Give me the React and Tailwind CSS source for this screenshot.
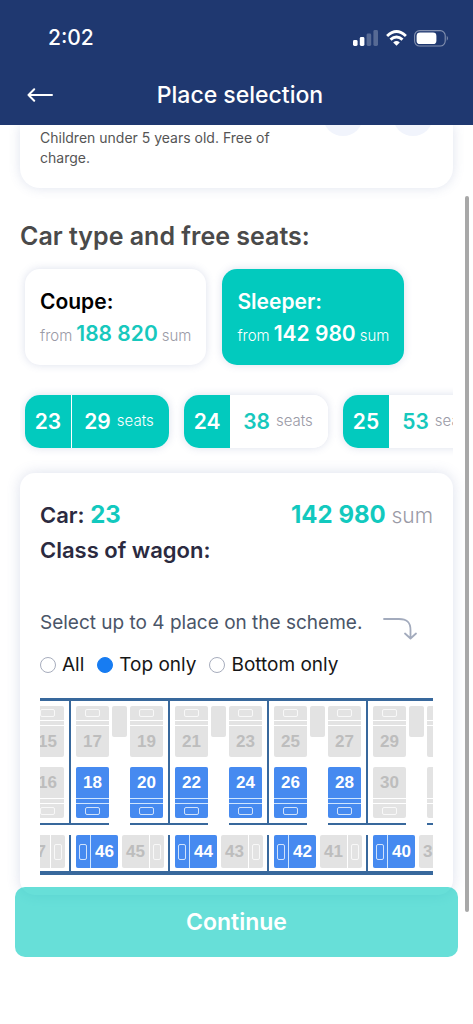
import React, { useState } from "react";

const price = (n) => String(n).replace(/\B(?=(\d{3})+$)/g, " ");

const carTypes = [
  { name: "Coupe", from: 188820 },
  { name: "Sleeper", from: 142980 },
];

const cars = [
  { number: 23, seats: 29 },
  { number: 24, seats: 38 },
  { number: 25, seats: 53 },
];

const compartments = [
  { upper: [13, 15], lower: [14, 16], side: [48, 47] },
  { upper: [17, 19], lower: [18, 20], side: [46, 45] },
  { upper: [21, 23], lower: [22, 24], side: [44, 43] },
  { upper: [25, 27], lower: [26, 28], side: [42, 41] },
  { upper: [29, 31], lower: [30, 32], side: [40, 39] },
];

const freeSeats = new Set([18, 20, 22, 24, 26, 28, 40, 42, 44, 46]);

function StatusBar() {
  return (
    <div className="flex items-center justify-between pt-[25px] pr-6 pl-12 text-white">
      <span className="text-[21px] leading-[26px] font-medium">2:02</span>
      <div className="flex items-center gap-[7px]">
        <svg width="26" height="16" viewBox="0 0 26 16" fill="currentColor" aria-hidden="true">
          <rect x="0" y="10" width="4.6" height="6" rx="1.4" />
          <rect x="6.8" y="7" width="4.6" height="9" rx="1.4" />
          <rect x="13.6" y="3.5" width="4.6" height="12.5" rx="1.4" opacity="0.25" />
          <rect x="20.4" y="0" width="4.6" height="16" rx="1.4" opacity="0.25" />
        </svg>
        <svg width="21" height="16" viewBox="0 0 21 16" fill="none" stroke="currentColor" strokeWidth="2.9" aria-hidden="true">
          <path d="M1.1 6 Q10.5 -2.8 19.9 6" />
          <path d="M4.5 9.7 Q10.5 4.3 16.5 9.7" />
          <path d="M7.2 12.4 Q10.5 9.5 13.8 12.4 L10.5 15.8 Z" fill="currentColor" stroke="none" />
        </svg>
        <svg width="35" height="17" viewBox="0 0 35 17" fill="none" aria-hidden="true">
          <rect x="0.6" y="0.6" width="30.6" height="15.4" rx="5" stroke="currentColor" strokeWidth="1.1" opacity="0.45" />
          <rect x="2.6" y="2.5" width="19.8" height="11.6" rx="3.4" fill="currentColor" />
          <path d="M32.8 5.8 Q34.8 8.3 32.8 10.8 Z" fill="currentColor" opacity="0.5" />
        </svg>
      </div>
    </div>
  );
}

function Pillow({ upright }) {
  return (
    <span
      className={
        "block rounded-[2px] border border-white/75 " +
        (upright ? "h-4 w-2" : "h-2 w-[15px]")
      }
    />
  );
}

function Berth({ number, level }) {
  const free = freeSeats.has(number);
  const fill = free ? "bg-[#468af0]" : "bg-[#e3e3e3]";
  return (
    <button
      type="button"
      disabled={!free}
      aria-label={"Seat " + number}
      className={
        "flex h-[51px] w-[33px] gap-px overflow-hidden rounded-[2px] " +
        (level === "upper" ? "flex-col-reverse " : "flex-col ") +
        (free ? "bg-[#cfe6ff] text-white" : "bg-white text-[#bdbdbd]")
      }
    >
      <span className={"flex w-full flex-1 items-center justify-center text-[17px] leading-5 " + fill}>
        {number}
      </span>
      <span className={"h-1 w-full " + fill} />
      <span className={"flex h-[14px] w-full items-center justify-center " + fill}>
        <Pillow />
      </span>
    </button>
  );
}

function SideBerth({ number, reverse }) {
  const free = freeSeats.has(number);
  const fill = free ? "bg-[#468af0]" : "bg-[#e3e3e3]";
  return (
    <button
      type="button"
      disabled={!free}
      aria-label={"Seat " + number}
      className={
        "flex h-[33px] w-[42px] gap-px overflow-hidden rounded-[2px] " +
        (reverse ? "flex-row-reverse " : "") +
        (free ? "bg-[#cfe6ff] text-white" : "bg-white text-[#bdbdbd]")
      }
    >
      <span className={"flex h-full w-[14px] items-center justify-center " + fill}>
        <Pillow upright />
      </span>
      <span className={"flex h-full flex-1 items-center justify-center text-[17px] leading-5 " + fill}>
        {number}
      </span>
    </button>
  );
}

function Compartment({ upper, lower, side }) {
  return (
    <div className="w-[99px] shrink-0">
      <div className="border-l-2 border-[#38689c] pt-[5px] pl-[5px]">
        <div className="flex gap-[3px]">
          <Berth number={upper[0]} level="upper" />
          <span className="h-[31px] w-[15px] rounded-[2px] bg-[#e3e3e3]" />
          <Berth number={upper[1]} level="upper" />
        </div>
        <div className="mt-[10px] flex gap-[21px]">
          <Berth number={lower[0]} level="lower" />
          <Berth number={lower[1]} level="lower" />
        </div>
        <div className="mt-[5px] -ml-[5px] flex justify-between">
          <span className="h-[2px] w-[38px] bg-[#38689c]" />
          <span className="h-[2px] w-[38px] bg-[#38689c]" />
        </div>
      </div>
      <div className="mt-[10px] flex gap-1 border-l-2 border-[#38689c] pb-[3px] pl-[5px]">
        <SideBerth number={side[0]} />
        <SideBerth number={side[1]} reverse />
      </div>
    </div>
  );
}

export default function App() {
  const [type, setType] = useState("Sleeper");
  const [car, setCar] = useState(23);
  const [filter, setFilter] = useState("Top only");

  return (
    <div className="relative min-h-screen overflow-hidden bg-white font-['Inter',sans-serif]">
      <header className="relative z-10 bg-[#1f3870] pb-[15px] text-white">
        <StatusBar />
        <div className="mt-[29px] grid grid-cols-[1fr_auto_1fr] items-center pr-5 pl-[27px]">
          <button type="button" aria-label="Back" className="w-[26px]">
            <svg width="26" height="14" viewBox="0 0 26 14" fill="none" stroke="currentColor" strokeWidth="2" strokeLinecap="round" strokeLinejoin="round" aria-hidden="true">
              <path d="M25 7H1.5M7.2 1.3L1.5 7l5.7 5.7" />
            </svg>
          </button>
          <h1 className="text-[23px] leading-[30px] font-medium">Place selection</h1>
        </div>
      </header>

      <main className="px-5">
        <section className="flex items-start justify-between rounded-b-[20px] px-5 pt-[3px] pb-5 shadow-[0_0_12px_rgba(80,100,160,0.18)]">
          <p className="w-60 text-[14px] leading-5 text-[#555]">
            Children under 5 years old. Free of charge.
          </p>
          <div className="-mt-8 flex gap-[30px]">
            <button type="button" aria-label="Remove child" className="size-10 rounded-full bg-[#f1f4fc]" />
            <button type="button" aria-label="Add child" className="size-10 rounded-full bg-[#f1f4fc]" />
          </div>
        </section>

        <h2 className="mt-8 text-[25px] leading-8 font-semibold text-[#4a4a4a]">
          Car type and free seats:
        </h2>

        <div className="mt-[17px] flex gap-4 pl-[5px]">
          {carTypes.map((t) => {
            const active = t.name === type;
            return (
              <button
                key={t.name}
                type="button"
                aria-pressed={active}
                onClick={() => setType(t.name)}
                className={
                  "h-24 rounded-[15px] px-[15px] pt-[3px] text-left whitespace-nowrap shadow-[0_0_8px_rgba(80,100,160,0.2)] " +
                  (active ? "bg-[#02cabe] text-white" : "bg-white text-black")
                }
              >
                <span className="block text-[21px] leading-8 font-semibold">{t.name}:</span>
                <span className="flex items-baseline gap-1 leading-8">
                  <span className={"text-[15px] font-light " + (active ? "" : "text-[#9a9aa6]")}>from</span>
                  <span className={"text-[21px] font-semibold " + (active ? "" : "text-[#17c8bd]")}>{price(t.from)}</span>
                  <span className={"text-[15px] font-light " + (active ? "" : "text-[#9a9aa6]")}>sum</span>
                </span>
              </button>
            );
          })}
        </div>

        <div className="mt-[22px] flex gap-[15px] overflow-hidden py-2 pl-[5px]">
          {cars.map((c) => {
            const active = c.number === car;
            return (
              <button
                key={c.number}
                type="button"
                aria-pressed={active}
                onClick={() => setCar(c.number)}
                className="flex h-[53px] w-36 shrink-0 gap-px overflow-hidden rounded-[15px] bg-white shadow-[0_0_8px_rgba(80,100,160,0.2)]"
              >
                <span className="flex h-full w-[46px] items-center justify-center bg-[#02cabe] text-[21px] font-semibold text-white">
                  {c.number}
                </span>
                <span
                  className={
                    "flex h-full flex-1 items-center justify-center gap-[6px] pr-[3px] " +
                    (active ? "bg-[#02cabe] text-white" : "bg-white")
                  }
                >
                  <span className={"text-[21px] font-semibold " + (active ? "" : "text-[#17c8bd]")}>{c.seats}</span>
                  <span className={"text-[15px] font-light " + (active ? "" : "text-[#9a9aa6]")}>seats</span>
                </span>
              </button>
            );
          })}
        </div>

        <section className="mt-[17px] rounded-[15px] px-5 pt-7 pb-5 shadow-[0_0_14px_rgba(80,100,160,0.2)]">
          <div className="flex items-baseline justify-between leading-7">
            <p className="text-[22px] font-semibold text-[#2b2a40]">
              Car: <span className="text-[24px] font-bold text-[#12c9be]">{car}</span>
            </p>
            <p className="text-[24px] font-bold text-[#12c9be]">
              {price(142980)} <span className="text-[21px] font-light text-[#9a9aa6]">sum</span>
            </p>
          </div>
          <p className="mt-[6px] text-[22px] leading-7 font-semibold text-[#2b2a40]">Class of wagon:</p>

          <div className="mt-[42px] flex items-center gap-[21px]">
            <p className="text-[19px] leading-7 text-[#4a5568]">Select up to 4 place on the scheme.</p>
            <svg className="mt-3 shrink-0" width="34" height="22" viewBox="0 0 34 22" fill="none" stroke="#a3abbd" strokeWidth="1.8" strokeLinecap="round" strokeLinejoin="round" aria-hidden="true">
              <path d="M1 1H16C24 1 27.500 4 27.500 12V20M22 15.500L27.500 20.500L33 15.500" />
            </svg>
          </div>

          <fieldset aria-label="Seat position" className="mt-[11px] flex gap-[13px]">
            {["All", "Top only", "Bottom only"].map((name) => (
              <label key={name} className="flex items-center gap-[6px] text-[19px] leading-7 text-[#161616]">
                <input
                  type="radio"
                  name="position"
                  checked={filter === name}
                  onChange={() => setFilter(name)}
                  className="size-4 shrink-0 appearance-none rounded-full border border-[#a7adbd] bg-white checked:border-[#177cf2] checked:bg-[#177cf2]"
                />
                {name}
              </label>
            ))}
          </fieldset>

          <div className="mt-[19px] overflow-hidden border-t-[3px] border-b-4 border-[#38689c] font-['Liberation_Sans',sans-serif] font-bold">
            <div className="-ml-[70px] flex">
              {compartments.map((c) => (
                <Compartment key={c.upper[0]} {...c} />
              ))}
            </div>
          </div>
        </section>
      </main>

      <footer className="relative -mt-2 px-[15px]">
        <button type="button" className="h-[70px] w-full rounded-[10px] bg-[#02cabe]/60 text-[23px] font-semibold text-white">
          Continue
        </button>
      </footer>

      <div className="absolute top-[196px] right-1 h-[716px] w-1 rounded-full bg-[#a8a8a8]" aria-hidden="true" />
    </div>
  );
}
